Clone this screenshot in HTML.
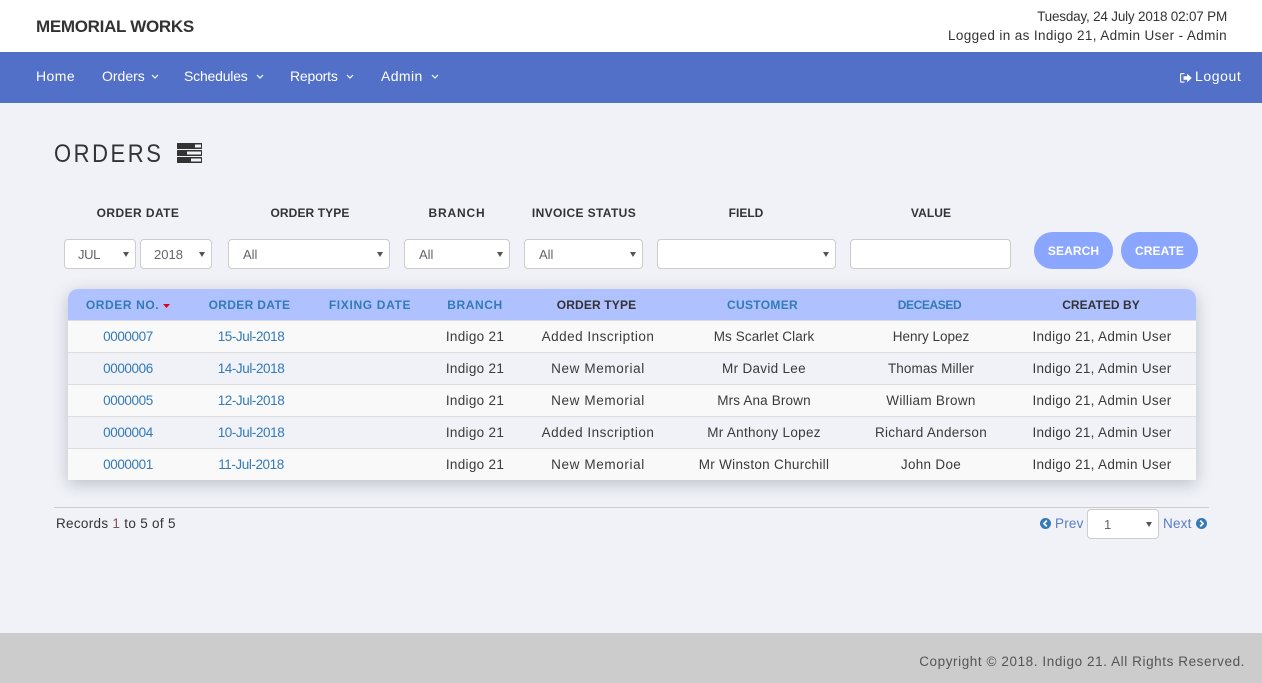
<!DOCTYPE html>
<html lang="en">
<head>
<meta charset="utf-8">
<title>Orders</title>
<style>
*{box-sizing:border-box}
html,body{margin:0;padding:0}
body{width:1262px;height:683px;overflow:hidden;position:relative;background:#f0f2f8;font-family:"Liberation Sans",sans-serif;font-size:14px;color:#333}
.abs{position:absolute;white-space:nowrap}
#top{position:absolute;left:0;top:0;width:1262px;height:52px;background:#fff}
#nav{position:absolute;left:0;top:52px;width:1262px;height:51px;background:#5270c8}
.nv{position:absolute;top:15px;color:#fff;font-size:14px;line-height:18px;white-space:nowrap}
.nv svg{position:absolute;top:7px}
.lb{position:absolute;top:206px;font-weight:bold;font-size:12px;line-height:15px;text-align:center;color:#333;white-space:nowrap}
.sel{position:absolute;height:30px;background:#fff;border:1px solid #ccc;border-radius:4px;font-size:13px;color:#666;line-height:29px;white-space:nowrap}
.sel.ar:after{content:"";position:absolute;right:6px;top:12px;border-left:3px solid transparent;border-right:3px solid transparent;border-top:5px solid #555}
.btn{position:absolute;top:232px;height:37px;border-radius:19px;background:#8aa6ff;color:#fff;font-weight:bold;font-size:12px;line-height:38px;text-align:center;letter-spacing:.1px}
#wrap{position:absolute;left:68px;top:289px;width:1128px;height:191px;box-shadow:0 4px 16px rgba(60,60,80,.28);border-radius:10px 10px 0 0}
table{border-collapse:separate;border-spacing:0;table-layout:fixed;width:1128px}
th{height:31px;background:#afc2ff;font-size:12px;font-weight:bold;padding:0;color:#337ab7;text-align:center;line-height:30px}
th:first-child{border-radius:10px 0 0 0}
th:last-child{border-radius:0 10px 0 0}
th.d{color:#333}
th.sh{padding-right:3px}
td{height:32px;padding:0;text-align:center;font-size:13.5px;letter-spacing:.3px;border-top:1px solid #ddd;background:#f9f9f9;color:#3a3a3a}
tbody tr:nth-child(even) td{background:#f0f2f8}
td.l{color:#337ab7;letter-spacing:-.4px}
td.dt{color:#337ab7;letter-spacing:-.43px}
td.a{letter-spacing:.5px}
td.n{letter-spacing:.63px}
td.c{padding-left:2px}
#foot{position:absolute;left:0;top:633px;width:1262px;height:50px;background:#ccc}
</style>
</head>
<body>
<div id="top"></div>
<div class="abs" style="left:36px;top:16px;font-size:17px;line-height:22px;font-weight:bold;color:#333;letter-spacing:-.3px">MEMORIAL WORKS</div>
<div class="abs" style="right:35px;top:8px;font-size:13.5px;line-height:18px;letter-spacing:-.2px;color:#333">Tuesday, 24 July 2018 02:07 PM</div>
<div class="abs" style="right:35px;top:27px;font-size:13.5px;line-height:18px;letter-spacing:.37px;color:#333">Logged in as Indigo 21, Admin User - Admin</div>

<div id="nav">
<span class="nv" style="left:36px;letter-spacing:.45px">Home</span>
<span class="nv" style="left:102px">Orders<svg style="left:49px" width="8" height="6" viewBox="0 0 8 6"><path d="M1 1l3 3 3-3" fill="none" stroke="#fff" stroke-width="1.2"/></svg></span>
<span class="nv" style="left:184px;letter-spacing:-.2px">Schedules<svg style="left:72px" width="8" height="6" viewBox="0 0 8 6"><path d="M1 1l3 3 3-3" fill="none" stroke="#fff" stroke-width="1.2"/></svg></span>
<span class="nv" style="left:290px;letter-spacing:-.2px">Reports<svg style="left:56px" width="8" height="6" viewBox="0 0 8 6"><path d="M1 1l3 3 3-3" fill="none" stroke="#fff" stroke-width="1.2"/></svg></span>
<span class="nv" style="left:381px;letter-spacing:.4px">Admin<svg style="left:50px" width="8" height="6" viewBox="0 0 8 6"><path d="M1 1l3 3 3-3" fill="none" stroke="#fff" stroke-width="1.2"/></svg></span>
<svg style="position:absolute;left:1180px;top:21px" width="12" height="10" viewBox="0 0 12 10"><path d="M4.500.7H1.200a.6.6 0 0 0-.6.6v7.200c0 .4.3.6.6.6h3.300" fill="none" stroke="#fff" stroke-width="1.100"/><path d="M3.500 3.200h3.700V.8L11.800 5 7.200 9.200V6.800H3.500z" fill="#fff"/></svg>
<span class="nv" style="left:1195px;letter-spacing:.6px">Logout</span>
</div>

<div class="abs" style="left:54px;top:138px;font-size:25px;line-height:32px;letter-spacing:2.9px;color:#333;transform:scaleX(.88);transform-origin:left center">ORDERS</div>
<svg style="position:absolute;left:177px;top:143px" width="25" height="20" viewBox="0 0 25 20">
<rect width="25" height="6" y="0" rx=".6" fill="#333"/><rect width="25" height="6" y="7" rx=".6" fill="#333"/><rect width="25" height="6" y="14" rx=".6" fill="#333"/>
<rect x="18" y="1.500" width="6" height="3" fill="#f0f2f8"/><rect x="10" y="8.500" width="14" height="3" fill="#f0f2f8"/><rect x="14" y="15.500" width="10" height="3" fill="#f0f2f8"/>
</svg>

<div class="lb" style="left:68px;width:140px;letter-spacing:.42px">ORDER DATE</div>
<div class="lb" style="left:240px;width:140px;letter-spacing:.1px">ORDER TYPE</div>
<div class="lb" style="left:407px;width:100px;letter-spacing:.85px">BRANCH</div>
<div class="lb" style="left:514px;width:140px;letter-spacing:.38px">INVOICE STATUS</div>
<div class="lb" style="left:696px;width:100px">FIELD</div>
<div class="lb" style="left:881px;width:100px;letter-spacing:.1px">VALUE</div>

<div class="sel ar" style="left:64px;top:239px;width:72px;padding-left:13px;letter-spacing:-.4px">JUL</div>
<div class="sel ar" style="left:140px;top:239px;width:72px;padding-left:13px">2018</div>
<div class="sel ar" style="left:228px;top:239px;width:162px;padding-left:14px">All</div>
<div class="sel ar" style="left:404px;top:239px;width:106px;padding-left:14px">All</div>
<div class="sel ar" style="left:524px;top:239px;width:119px;padding-left:14px">All</div>
<div class="sel ar" style="left:657px;top:239px;width:179px"></div>
<div class="sel" style="left:850px;top:239px;width:161px"></div>
<div class="btn" style="left:1034px;width:79px">SEARCH</div>
<div class="btn" style="left:1121px;width:77px">CREATE</div>

<div id="wrap">
<table>
<colgroup><col style="width:120px"><col style="width:126px"><col style="width:112px"><col style="width:98px"><col style="width:148px"><col style="width:184px"><col style="width:150px"><col style="width:190px"></colgroup>
<thead><tr>
<th style="letter-spacing:.6px">ORDER NO. <svg width="7" height="4" viewBox="0 0 7 4" style="vertical-align:1px"><path d="M0 0h7L3.500 4z" fill="#e3001b"/></svg></th>
<th class="sh" style="letter-spacing:.33px">ORDER DATE</th><th style="letter-spacing:.66px">FIXING DATE</th><th style="letter-spacing:.6px">BRANCH</th><th class="d sh" style="letter-spacing:.15px">ORDER TYPE</th><th class="sh" style="letter-spacing:.33px">CUSTOMER</th><th class="sh" style="letter-spacing:-.4px">DECEASED</th><th class="d" style="letter-spacing:.05px">CREATED BY</th>
</tr></thead>
<tbody>
<tr><td class="l">0000007</td><td class="dt">15-Jul-2018</td><td></td><td>Indigo 21</td><td class="a">Added Inscription</td><td style="letter-spacing:.1px">Ms Scarlet Clark</td><td style="letter-spacing:0">Henry Lopez</td><td class="c">Indigo 21, Admin User</td></tr>
<tr><td class="l">0000006</td><td class="dt">14-Jul-2018</td><td></td><td>Indigo 21</td><td class="n">New Memorial</td><td>Mr David Lee</td><td style="letter-spacing:.1px">Thomas Miller</td><td class="c">Indigo 21, Admin User</td></tr>
<tr><td class="l">0000005</td><td class="dt">12-Jul-2018</td><td></td><td>Indigo 21</td><td class="n">New Memorial</td><td style="letter-spacing:.15px">Mrs Ana Brown</td><td>William Brown</td><td class="c">Indigo 21, Admin User</td></tr>
<tr><td class="l">0000004</td><td class="dt">10-Jul-2018</td><td></td><td>Indigo 21</td><td class="a">Added Inscription</td><td>Mr Anthony Lopez</td><td>Richard Anderson</td><td class="c">Indigo 21, Admin User</td></tr>
<tr><td class="l">0000001</td><td class="dt">11-Jul-2018</td><td></td><td>Indigo 21</td><td class="n">New Memorial</td><td>Mr Winston Churchill</td><td>John Doe</td><td class="c">Indigo 21, Admin User</td></tr>
</tbody>
</table>
</div>

<div class="abs" style="left:54px;top:507px;width:1155px;height:1px;background:#ccc"></div>
<div class="abs" style="left:56px;top:515px;font-size:13.5px;line-height:17px;letter-spacing:.3px;color:#333">Records <span style="color:#7a5555">1</span> to 5 of 5</div>

<svg style="position:absolute;left:1040px;top:518px" width="11" height="11" viewBox="0 0 11 11"><circle cx="5.500" cy="5.500" r="5.500" fill="#337ab7"/><path d="M6.800 2.600L3.900 5.500l2.900 2.900" fill="none" stroke="#fff" stroke-width="1.700"/></svg>
<div class="abs" style="left:1055px;top:515px;font-size:13.5px;line-height:17px;letter-spacing:.2px;color:#5a7cc0">Prev</div>
<div class="sel ar" style="left:1087px;top:509px;width:72px;padding-left:16px">1</div>
<div class="abs" style="left:1163px;top:515px;font-size:13.5px;line-height:17px;letter-spacing:.2px;color:#5a7cc0">Next</div>
<svg style="position:absolute;left:1196px;top:518px" width="11" height="11" viewBox="0 0 11 11"><circle cx="5.500" cy="5.500" r="5.500" fill="#337ab7"/><path d="M4.200 2.600l2.900 2.900-2.900 2.900" fill="none" stroke="#fff" stroke-width="1.700"/></svg>

<div id="foot"></div>
<div class="abs" style="right:17px;top:653px;font-size:13.5px;line-height:17px;letter-spacing:.58px;color:#555">Copyright © 2018. Indigo 21. All Rights Reserved.</div>
</body>
</html>
